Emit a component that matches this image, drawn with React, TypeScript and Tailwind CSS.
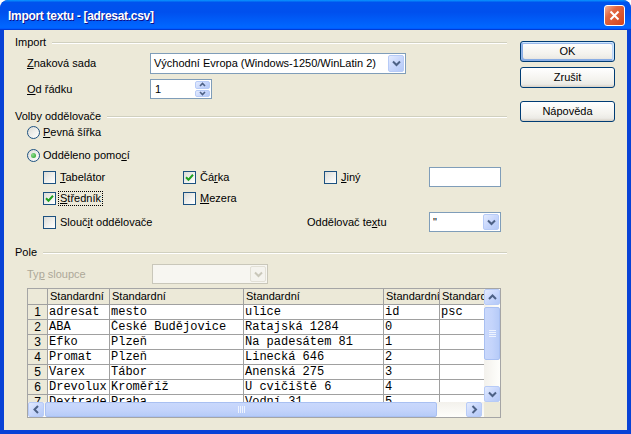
import React from "react";

const SANS = "font-['Liberation_Sans',Arial,sans-serif]";
const MONO = "font-['Liberation_Mono','Courier_New',monospace]";

function U({ c }: { c: string }) {
  return <span className="underline">{c}</span>;
}

type Dir = "up" | "down" | "left" | "right";

function Chev({ dir, color = "#4d6185", small = false }: { dir: Dir; color?: string; small?: boolean }) {
  const horiz = dir === "up" || dir === "down";
  if (small) {
    const d = dir === "up" ? "M1 4 L3.5 1.5 L6 4" : "M1 1 L3.5 3.5 L6 1";
    return (
      <svg width="7" height="5" viewBox="0 0 7 5">
        <path d={d} fill="none" stroke={color} strokeWidth="1.6" />
      </svg>
    );
  }
  const d = {
    down: "M1 1.5 L4.5 5 L8 1.5",
    up: "M1 5 L4.5 1.5 L8 5",
    left: "M5 1 L1.5 4.5 L5 8",
    right: "M1.5 1 L5 4.5 L1.5 8",
  }[dir];
  return (
    <svg width={horiz ? 9 : 7} height={horiz ? 7 : 9} viewBox={horiz ? "0 0 9 7" : "0 0 7 9"}>
      <path d={d} fill="none" stroke={color} strokeWidth="2" />
    </svg>
  );
}

const blueBtn =
  "rounded-[2px] border border-[#b7cbf7] bg-[linear-gradient(135deg,#e3ebfe_0%,#c8d7fc_50%,#b4c9f7_100%)] flex items-center justify-center";

function Select({ className, value, disabled = false }: { className: string; value?: string; disabled?: boolean }) {
  return (
    <div
      className={`${className} border flex items-stretch ${
        disabled ? "border-[#c9c7ba] bg-[#f7f6f1]" : "border-[#7f9db9] bg-white"
      }`}
    >
      <div className="flex-1 pl-[3px] flex items-center whitespace-nowrap overflow-hidden">{value}</div>
      {disabled ? (
        <div className="w-[16px] m-[1px] rounded-[2px] border border-[#e2e0d6] bg-[#f4f3ee] flex items-center justify-center">
          <Chev dir="down" color="#c9c7ba" />
        </div>
      ) : (
        <div className={`w-[16px] m-[1px] ${blueBtn}`}>
          <Chev dir="down" />
        </div>
      )}
    </div>
  );
}

function Box({ checked = false }: { checked?: boolean }) {
  return (
    <div className="w-[13px] h-[13px] shrink-0 border border-[#1c5180] bg-[linear-gradient(135deg,#dcdcd7_0%,#f2f2ef_60%,#ffffff_100%)] flex items-center justify-center">
      {checked && (
        <svg width="9" height="9" viewBox="0 0 9 9">
          <path d="M1 4.2 L3.5 6.7 L8 1.8" fill="none" stroke="#21a121" strokeWidth="2" />
        </svg>
      )}
    </div>
  );
}

function Radio({ checked = false }: { checked?: boolean }) {
  return (
    <div className="w-[13px] h-[13px] shrink-0 rounded-full border border-[#1c5180] bg-[linear-gradient(135deg,#dcdcd7_0%,#f2f2ef_60%,#ffffff_100%)] flex items-center justify-center">
      {checked && <div className="w-[5px] h-[5px] rounded-full bg-[radial-gradient(circle_at_35%_35%,#8fdc8f,#21a121)]" />}
    </div>
  );
}

function Sec({ label }: { label: string }) {
  return (
    <div className="flex items-center h-[13px]">
      <span>{label}</span>
      <div className="flex-1 ml-[6px] h-[2px] border-t border-[#d0d0bf] border-b border-b-white" />
    </div>
  );
}

function Btn({ label, def = false, className = "" }: { label: React.ReactNode; def?: boolean; className?: string }) {
  return (
    <div
      className={`${className} h-[21px] w-[95px] rounded-[3px] border border-[#003c74] bg-[linear-gradient(180deg,#ffffff_0%,#f4f3ee_60%,#ecebe6_85%,#d6d0c5_100%)] flex items-center justify-center ${
        def
          ? "shadow-[inset_-1px_1px_#cee7ff,inset_1px_2px_#98b8ea,inset_-2px_2px_#bcd4f6,inset_1px_-1px_#89ade4,inset_2px_-2px_#89ade4]"
          : ""
      }`}
    >
      {label}
    </div>
  );
}

const widths = ["w-[62px]", "w-[134px]", "w-[140px]", "w-[56px]", "w-[60px]"];

const rows: string[][] = [
  ["adresat", "mesto", "ulice", "id", "psc"],
  ["ABA", "České Budějovice", "Ratajská 1284", "0", ""],
  ["Efko", "Plzeň", "Na padesátem 81", "1", ""],
  ["Promat", "Plzeň", "Linecká 646", "2", ""],
  ["Varex", "Tábor", "Anenská 275", "3", ""],
  ["Drevolux", "Kroměříž", "U cvičiště 6", "4", ""],
  ["Dextrade", "Praha", "Vodní 31", "5", ""],
];

function Table() {
  return (
    <div className="ml-[12px] mt-[4px] w-[474px] h-[130px] border border-[#a5a5a5] flex flex-col bg-[#ece9d8]">
      <div className="flex h-[113px]">
        <div className="w-[456px] h-[113px] overflow-hidden bg-white">
          <div className="flex w-[472px]">
            <div className="w-[20px] h-[16px] shrink-0 border-r border-b border-[#a0a0a0] bg-[#ece9d8]" />
            {widths.map((w, i) => (
              <div
                key={i}
                className={`${w} h-[16px] shrink-0 border-r border-b border-[#a0a0a0] bg-[#ece9d8] pl-[2px] leading-[15px] whitespace-nowrap overflow-hidden`}
              >
                Standardní
              </div>
            ))}
          </div>
          {rows.map((r, ri) => (
            <div key={ri} className="flex w-[472px]">
              <div className="w-[20px] h-[15px] shrink-0 border-r border-b border-[#a0a0a0] bg-[#ece9d8] text-center text-[12px] leading-[14px]">
                {ri + 1}
              </div>
              {r.map((c, ci) => (
                <div
                  key={ci}
                  className={`${widths[ci]} h-[15px] shrink-0 border-r border-b border-[#a0a0a0] pl-[1px] ${MONO} text-[12px] leading-[14px] whitespace-nowrap overflow-hidden`}
                >
                  {c}
                </div>
              ))}
            </div>
          ))}
        </div>
        {/* vertical scrollbar */}
        <div className="w-[16px] h-[113px] flex flex-col bg-[linear-gradient(90deg,#f3f1ec,#fefefb)]">
          <div className={`h-[16px] ${blueBtn}`}>
            <Chev dir="up" />
          </div>
          <div className="h-[53px] mt-[2px] rounded-[2px] border border-[#a9c0f2] bg-[linear-gradient(90deg,#c9d8fc_0%,#c4d4fb_50%,#b6cbf8_100%)] flex flex-col items-center justify-center gap-[1px]">
            <div className="w-[7px] h-[1px] bg-[#eef3fe]" />
            <div className="w-[7px] h-[1px] bg-[#eef3fe]" />
            <div className="w-[7px] h-[1px] bg-[#eef3fe]" />
            <div className="w-[7px] h-[1px] bg-[#eef3fe]" />
          </div>
          <div className="flex-1" />
          <div className={`h-[16px] ${blueBtn}`}>
            <Chev dir="down" />
          </div>
        </div>
      </div>
      <div className="flex h-[15px]">
        <div className="w-[456px] flex bg-[linear-gradient(180deg,#f3f1ec,#fefefb)]">
          <div className={`w-[16px] ${blueBtn}`}>
            <Chev dir="left" />
          </div>
          <div className="w-[392px] ml-[1px] rounded-[2px] border border-[#a9c0f2] bg-[linear-gradient(180deg,#c9d8fc_0%,#c4d4fb_50%,#b6cbf8_100%)] flex items-center justify-center gap-[1px]">
            <div className="w-[1px] h-[7px] bg-[#eef3fe]" />
            <div className="w-[1px] h-[7px] bg-[#eef3fe]" />
            <div className="w-[1px] h-[7px] bg-[#eef3fe]" />
            <div className="w-[1px] h-[7px] bg-[#eef3fe]" />
          </div>
          <div className="flex-1" />
          <div className={`w-[16px] mr-[2px] ${blueBtn}`}>
            <Chev dir="right" />
          </div>
        </div>
        <div className="flex-1 bg-[#ece9d8]" />
      </div>
    </div>
  );
}

export default function App() {
  return (
    <div className={`w-[631px] h-[434px] rounded-t-[8px] overflow-hidden bg-[#0842d6] flex flex-col ${SANS} text-[11px] text-black`}>
      <div className="h-[30px] shrink-0 rounded-t-[8px] bg-[linear-gradient(180deg,#0997ff_0%,#0053ee_8%,#0050ee_40%,#0066ff_88%,#0066ff_93%,#005bff_95%,#003dd7_96%,#003dd7_100%)] flex items-center pl-[8px] pr-[6px]">
        <span className="flex-1 pt-[1px] text-[12px] font-bold text-white tracking-[-0.3px] [text-shadow:1px_1px_#0f1089]">
          Import textu - [adresat.csv]
        </span>
        <div className="w-[21px] h-[21px] mt-[1px] rounded-[3px] border border-white bg-[linear-gradient(135deg,#f3b39b_0%,#e2663f_35%,#d2431c_100%)] flex items-center justify-center">
          <svg width="11" height="11" viewBox="0 0 11 11">
            <path d="M1.5 1.5 L9.5 9.5 M9.5 1.5 L1.5 9.5" stroke="white" strokeWidth="2" />
          </svg>
        </div>
      </div>
      <div className="flex-1 mx-[4px] mb-[4px] bg-[#ece9d8] flex">
        <div className="w-[492px] ml-[11px] pt-[6px] flex flex-col">
          <Sec label="Import" />
          <div className="mt-[4px] h-[21px] pl-[12px] flex items-center">
            <span className="w-[123px]">
              <U c="Z" />naková sada
            </span>
            <Select className="w-[256px] h-[21px]" value="Východní Evropa (Windows-1250/WinLatin 2)" />
          </div>
          <div className="mt-[5px] h-[20px] pl-[12px] flex items-center">
            <span className="w-[123px]">
              <U c="O" />d řádku
            </span>
            <div className="w-[62px] h-[20px] border border-[#7f9db9] bg-white flex items-stretch">
              <div className="flex-1 pl-[4px] flex items-center">1</div>
              <div className="w-[15px] m-[1px] flex flex-col gap-[1px]">
                <div className={`flex-1 ${blueBtn}`}>
                  <Chev dir="up" small />
                </div>
                <div className={`flex-1 ${blueBtn}`}>
                  <Chev dir="down" small />
                </div>
              </div>
            </div>
          </div>

          <div className="mt-[11px]">
            <Sec label="Volby oddělovače" />
          </div>
          <div className="mt-[3px] h-[13px] pl-[12px] flex items-center gap-[3px]">
            <Radio />
            <span>
              <U c="P" />evná šířka
            </span>
          </div>
          <div className="mt-[10px] h-[13px] pl-[12px] flex items-center gap-[3px]">
            <Radio checked />
            <span>
              Odděleno pomo<U c="c" />í
            </span>
          </div>
          <div className="mt-[5px] h-[20px] pl-[28px] flex items-center">
            <div className="w-[140px] flex items-center gap-[4px]">
              <Box />
              <span>
                <U c="T" />abelátor
              </span>
            </div>
            <div className="w-[141px] flex items-center gap-[4px]">
              <Box checked />
              <span>
                Čá<U c="r" />ka
              </span>
            </div>
            <div className="w-[105px] flex items-center gap-[4px]">
              <Box />
              <span>
                <U c="J" />iný
              </span>
            </div>
            <div className="w-[72px] h-[20px] border border-[#7f9db9] bg-white" />
          </div>
          <div className="mt-[5px] h-[13px] pl-[28px] flex items-center">
            <div className="w-[140px] flex items-center gap-[3px]">
              <Box checked />
              <span className="outline outline-1 outline-dotted outline-black px-[1px] leading-[13px]">
                <U c="S" />tředník
              </span>
            </div>
            <div className="w-[141px] flex items-center gap-[4px]">
              <Box />
              <span>
                <U c="M" />ezera
              </span>
            </div>
          </div>
          <div className="mt-[7px] h-[20px] pl-[28px] flex items-center">
            <div className="w-[264px] flex items-center gap-[4px]">
              <Box />
              <span>
                Slouč<U c="i" />t oddělovače
              </span>
            </div>
            <span className="w-[122px]">
              Oddělovač te<U c="x" />tu
            </span>
            <Select className="w-[72px] h-[20px]" value={'"'} />
          </div>

          <div className="mt-[14px]">
            <Sec label="Pole" />
          </div>
          <div className="mt-[5px] h-[20px] pl-[12px] flex items-center">
            <span className="w-[125px] text-[#aca899]">
              Ty<U c="p" /> sloupce
            </span>
            <Select className="w-[116px] h-[20px]" disabled />
          </div>
          <Table />
        </div>
        <div className="ml-[13px] pt-[11px] flex flex-col">
          <Btn label="OK" def />
          <Btn label="Zrušit" className="mt-[5px]" />
          <Btn label="Nápověda" className="mt-[13px]" />
        </div>
      </div>
    </div>
  );
}
